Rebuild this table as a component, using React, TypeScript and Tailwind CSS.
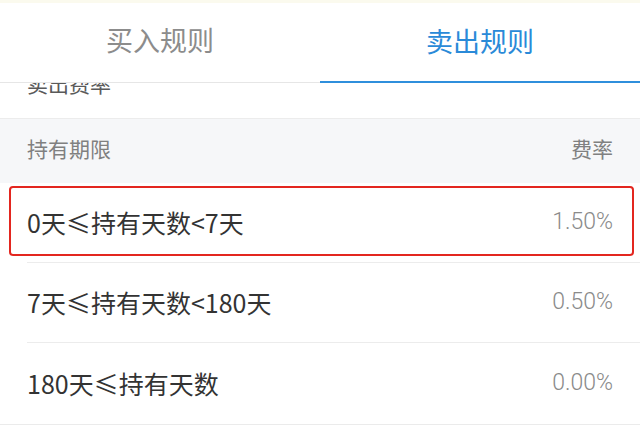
import * as React from 'react'

const FONT = 'font-["Roboto","Noto_Sans_CJK_SC",sans-serif]'
const LABEL = 'font-["Liberation_Sans_Narrow","Noto_Sans_CJK_SC",sans-serif]'
const CJK = 'font-["Noto_Sans_CJK_SC",sans-serif]'

const rows = [
  { from: '0天', to: '<7天', rate: '1.50%', marked: true },
  { from: '7天', to: '<180天', rate: '0.50%' },
  { from: '180天', to: '', rate: '0.00%' },
]

export default function App() {
  return (
    <div className={`${FONT} w-[640px] h-[436px] overflow-hidden bg-white`}>
      {/* status strip */}
      <div className="h-[3px] bg-[#fbfaee]" />

      {/* tabs */}
      <div className="flex h-[80px]">
        <Tab label="买入规则" />
        <Tab label="卖出规则" active />
      </div>

      {/* section title, scrolled under the tab bar */}
      <div className="h-[36px] overflow-hidden border-b border-[#ececec] px-[27px]">
        <div className="mt-[-8px] text-[21px] leading-[21px] text-[#5a5a5a]">卖出费率</div>
      </div>

      <div className="flex h-[64px] items-center justify-between bg-[#f6f7f9] px-[27px] text-[21px] text-[#808080]">
        <span>持有期限</span>
        <span>费率</span>
      </div>

      <div className="border-b border-[#ebebeb]">
        {rows.map((row, i) => (
          <Row key={row.from} {...row} last={i === rows.length - 1} />
        ))}
      </div>
    </div>
  )
}

function Tab({ label, active }: { label: string; active?: boolean }) {
  return (
    <div
      className={
        active
          ? 'flex flex-1 items-center justify-center border-b-2 border-[#2f8fdc] pt-[2px] text-[27px] text-[#2a8ad8]'
          : 'flex flex-1 items-center justify-center border-b border-[#e6e6e6] text-[27px] text-[#8c8c8c]'
      }
    >
      {label}
    </div>
  )
}

function Row({
  from,
  to,
  rate,
  marked,
  last,
}: {
  from: string
  to: string
  rate: string
  marked?: boolean
  last?: boolean
}) {
  return (
    <div className="relative pl-[27px]">
      <div
        className={
          last
            ? 'flex h-[81px] items-center justify-between pr-[27px]'
            : 'flex h-[80px] items-center justify-between border-b border-[#ececec] pr-[27px]'
        }
      >
        <span className={`${LABEL} text-[25px] text-[#333333]`}>
          {from}
          <span className={CJK}>≤</span>
          持有天数{to}
        </span>
        <span className="text-[23px] font-light text-[#8a8a8a]">{rate}</span>
      </div>
      {marked && (
        <div className="pointer-events-none absolute left-[9px] right-[6px] top-[3px] bottom-[7px] rounded-[4px] border-2 border-[#e3261f]" />
      )}
    </div>
  )
}
